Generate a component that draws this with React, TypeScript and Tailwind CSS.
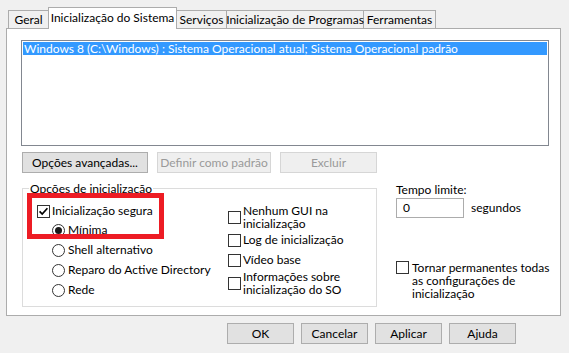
import React from "react";

const FONT = { fontFamily: "Lato, 'Noto Sans', sans-serif" };

function CheckBox({ checked = false }: { checked?: boolean }) {
  return (
    <div className="w-[13px] h-[13px] shrink-0 border border-[#333333] bg-white flex items-center justify-center">
      {checked && (
        <svg width="11" height="11" viewBox="0 0 11 11">
          <path d="M1.6 5.4 L4.2 8.1 L9.4 2.2" fill="none" stroke="#000" strokeWidth="1.7" />
        </svg>
      )}
    </div>
  );
}

function Radio({ checked = false }: { checked?: boolean }) {
  return (
    <div className="w-[13px] h-[13px] shrink-0 rounded-full border border-[#333333] bg-white flex items-center justify-center">
      {checked && <div className="w-[7px] h-[7px] rounded-full bg-[#1a1a1a]" />}
    </div>
  );
}

function Btn({ w, children, disabled = false }: { w: string; children: React.ReactNode; disabled?: boolean }) {
  return (
    <div
      className={
        "h-[21px] flex items-center justify-center border whitespace-nowrap " +
        w +
        (disabled
          ? " bg-[#efefef] border-[#d6d6d6] text-[#9a9a9a]"
          : " bg-[#e1e1e1] border-[#adadad] text-black")
      }
    >
      {children}
    </div>
  );
}

function Tab({ w, children }: { w: string; children: React.ReactNode }) {
  return (
    <div
      className={
        "h-[18px] border-t border-r border-[#acacac] bg-[#f0f0f0] flex items-center justify-center whitespace-nowrap " + w
      }
    >
      {children}
    </div>
  );
}

export default function App() {
  return (
    <div className="w-[569px] h-[353px] bg-[#f0f0f0] text-[12px] text-black flex flex-col overflow-hidden" style={FONT}>
      {/* Tabs */}
      <div className="h-[28px] flex items-end pl-[8px] relative z-10">
        <div className="w-[40px] h-[18px] border-t border-l border-[#acacac] bg-[#f0f0f0] flex items-center justify-center whitespace-nowrap">
          Geral
        </div>
        <div className="w-[129px] h-[22px] mb-[-1px] border-t border-l border-r border-[#acacac] bg-white flex items-center justify-center pb-[1px] whitespace-nowrap">
          Inicialização do Sistema
        </div>
        <Tab w="w-[50px]">Serviços</Tab>
        <Tab w="w-[137px]">Inicialização de Programas</Tab>
        <Tab w="w-[72px]">Ferramentas</Tab>
      </div>

      {/* Panel */}
      <div className="ml-[6px] w-[555px] h-[288px] shrink-0 border border-[#acacac] bg-white pl-[14px] pt-[11px] flex flex-col">
        {/* Listbox */}
        <div className="w-[528px] h-[106px] border border-[#828790] bg-white p-[1px]">
          <div className="h-[13px] leading-[13px] bg-[#3399ff] text-white pl-[1px] whitespace-nowrap">
            Windows 8 (C:\Windows) : Sistema Operacional atual; Sistema Operacional padrão
          </div>
        </div>

        {/* Buttons row */}
        <div className="mt-[6px] pl-[1px] flex gap-[9px]">
          <Btn w="w-[126px]">Opções avançadas...</Btn>
          <Btn w="w-[114px]" disabled>
            Definir como padrão
          </Btn>
          <Btn w="w-[97px]" disabled>
            Excluir
          </Btn>
        </div>

        {/* Lower area */}
        <div className="pl-[1px] flex">
          {/* Group box */}
          <div className="relative mt-[15px] w-[355px] h-[119px] border border-[#dcdcdc] pl-[14px] flex">
            <div className="absolute left-[6px] top-[-8px] leading-[16px] px-[1px] bg-white whitespace-nowrap">
              Opções de inicialização
            </div>

            {/* Left column */}
            <div className="w-[191px] pt-[13px] flex flex-col whitespace-nowrap">
              <div className="h-[18px] flex items-center gap-[2px]">
                <CheckBox checked />
                <span>Inicialização segura</span>
              </div>
              <div className="h-[20px] pl-[15px] flex items-center gap-[3px]">
                <Radio checked />
                <span>Mínima</span>
              </div>
              <div className="h-[20px] pl-[15px] flex items-center gap-[3px]">
                <Radio />
                <span>Shell alternativo</span>
              </div>
              <div className="h-[20px] pl-[15px] flex items-center gap-[3px]">
                <Radio />
                <span>Reparo do Active Directory</span>
              </div>
              <div className="h-[20px] pl-[15px] flex items-center gap-[3px]">
                <Radio />
                <span>Rede</span>
              </div>
            </div>

            {/* Right column */}
            <div className="pt-[15px] flex flex-col whitespace-nowrap">
              <div className="h-[26px] flex items-center gap-[2px]">
                <CheckBox />
                <span className="leading-[13px]">
                  Nenhum GUI na
                  <br />
                  inicialização
                </span>
              </div>
              <div className="h-[20px] flex items-center gap-[2px]">
                <CheckBox />
                <span>Log de inicialização</span>
              </div>
              <div className="h-[20px] flex items-center gap-[2px]">
                <CheckBox />
                <span>Vídeo base</span>
              </div>
              <div className="h-[26px] flex items-center gap-[2px]">
                <CheckBox />
                <span className="leading-[13px]">
                  Informações sobre
                  <br />
                  inicialização do SO
                </span>
              </div>
            </div>

            {/* Red annotation rectangle */}
            <div className="absolute left-[4px] top-[4px] w-[137px] h-[46px] border-[5px] border-[#ed1c24] pointer-events-none" />
          </div>

          {/* Right side */}
          <div className="ml-[19px] flex flex-col whitespace-nowrap">
            <div className="mt-[9px] leading-[16px]">Tempo limite:</div>
            <div className="flex items-center">
              <div className="w-[68px] h-[20px] border border-[#acacac] bg-white pl-[6px] flex items-center">0</div>
              <span className="ml-[7px]">segundos</span>
            </div>
            <div className="mt-[43px] flex items-start gap-[3px]">
              <CheckBox />
              <span className="leading-[13px]">
                Tornar permanentes todas
                <br />
                as configurações de
                <br />
                inicialização
              </span>
            </div>
          </div>
        </div>
      </div>

      {/* Bottom buttons */}
      <div className="mt-[7px] ml-[227px] flex gap-[7px]">
        <Btn w="w-[67px]">OK</Btn>
        <Btn w="w-[67px]">Cancelar</Btn>
        <Btn w="w-[67px]">Aplicar</Btn>
        <Btn w="w-[67px]">Ajuda</Btn>
      </div>
    </div>
  );
}
